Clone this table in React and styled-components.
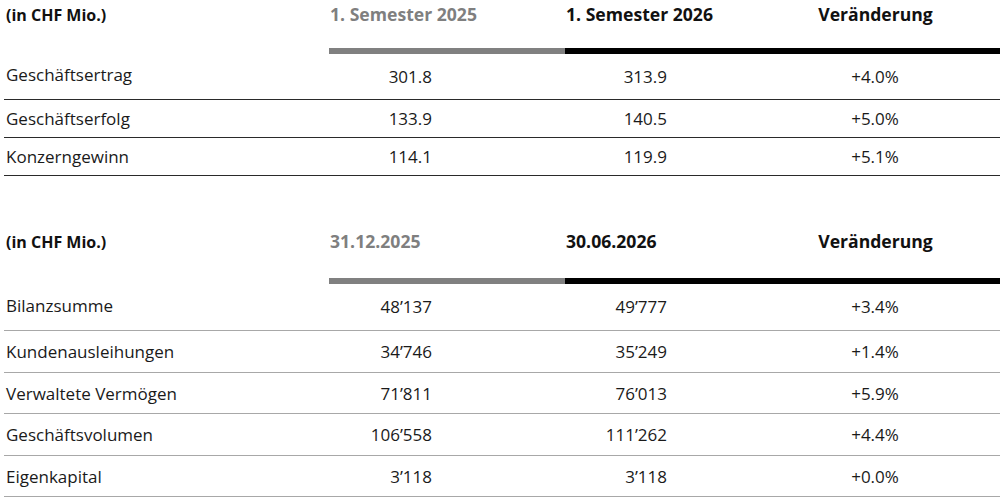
import React from "react";
import styled, { createGlobalStyle } from "styled-components";

const Global = createGlobalStyle`
  html, body { margin: 0; padding: 0; background: #fff; }
  body { font-family: "Open Sans", "Liberation Sans", sans-serif; color: #1a1a1a; }
`;

const Page = styled.div`
  width: 1000px;
  padding-left: 4px;
  box-sizing: border-box;
`;

const Table = styled.table`
  width: 996px;
  border-collapse: collapse;
  table-layout: fixed;
  margin-top: ${(p) => p.$top}px;
  font-size: 17px;
`;

const HeadCell = styled.th`
  height: ${(p) => p.$h}px;
  padding: ${(p) => (p.$label ? "4px 0 0 2px" : "3px 0 0 1px")};
  vertical-align: top;
  text-align: ${(p) => (p.$center ? "center" : "left")};
  padding-right: ${(p) => (p.$center ? 50 : 0)}px;
  font-size: ${(p) => (p.$label ? 16 : 17.6)}px;
  font-weight: 700;
  line-height: 22px;
  color: ${(p) => (p.$muted ? "#7f7f7f" : "#111")};
  border-bottom: ${(p) => (p.$bar ? `6px solid ${p.$bar}` : "0")};
  box-sizing: border-box;
  white-space: nowrap;
`;

const Row = styled.tr`
  height: ${(p) => p.$h}px;
  border-bottom: 1px solid ${(p) => p.$line};
`;

const Label = styled.td`
  padding: 0 0 0 2px;
  vertical-align: middle;
  white-space: nowrap;
`;

const Value = styled.td`
  padding: 0 133px 0 0;
  text-align: right;
  vertical-align: middle;
`;

const Change = styled.td`
  padding: 0 50px 0 0;
  text-align: center;
  vertical-align: middle;
`;

const Cols = () => (
  <colgroup>
    <col style={{ width: 325 }} />
    <col style={{ width: 236 }} />
    <col style={{ width: 235 }} />
    <col style={{ width: 200 }} />
  </colgroup>
);

const tables = [
  {
    top: 0,
    headH: 51,
    line: "#2a2a2a",
    heads: ["1. Semester 2025", "1. Semester 2026"],
    rows: [
      ["Geschäftsertrag", "301.8", "313.9", "+4.0%", 48],
      ["Geschäftserfolg", "133.9", "140.5", "+5.0%", 38],
      ["Konzerngewinn", "114.1", "119.9", "+5.1%", 38],
    ],
  },
  {
    top: 51,
    headH: 54,
    line: "#a8a8a8",
    heads: ["31.12.2025", "30.06.2026"],
    rows: [
      ["Bilanzsumme", "48’137", "49’777", "+3.4%", 50],
      ["Kundenausleihungen", "34’746", "35’249", "+1.4%", 42],
      ["Verwaltete Vermögen", "71’811", "76’013", "+5.9%", 41],
      ["Geschäftsvolumen", "106’558", "111’262", "+4.4%", 42],
      ["Eigenkapital", "3’118", "3’118", "+0.0%", 41],
    ],
  },
];

export default function App() {
  return (
    <Page>
      <Global />
      {tables.map((t, i) => (
        <Table key={i} $top={t.top}>
          <Cols />
          <thead>
            <tr>
              <HeadCell $label $h={t.headH}>(in CHF Mio.)</HeadCell>
              <HeadCell $h={t.headH} $muted $bar="#808080">{t.heads[0]}</HeadCell>
              <HeadCell $h={t.headH} $bar="#000">{t.heads[1]}</HeadCell>
              <HeadCell $h={t.headH} $center $bar="#000">Veränderung</HeadCell>
            </tr>
          </thead>
          <tbody>
            {t.rows.map((r) => (
              <Row key={r[0]} $h={r[4]} $line={t.line}>
                <Label>{r[0]}</Label>
                <Value>{r[1]}</Value>
                <Value>{r[2]}</Value>
                <Change>{r[3]}</Change>
              </Row>
            ))}
          </tbody>
        </Table>
      ))}
    </Page>
  );
}
